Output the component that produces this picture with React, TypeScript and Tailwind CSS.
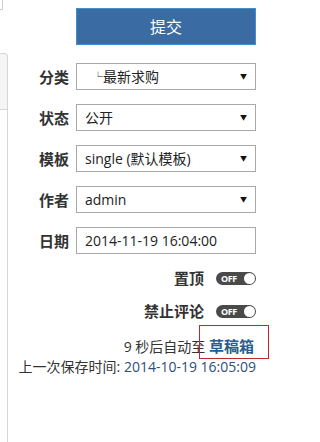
const font = "font-['Open_Sans','Noto_Sans_CJK_SC',sans-serif]";

const SelectRow = ({ label, value, arrow = true }: { label: string; value: React.ReactNode; arrow?: boolean }) => (
  <div className="flex items-center h-[27px]">
    <span className="w-[62px] pr-[1px] text-right text-[15px] font-bold text-[#333] leading-[20px]">{label}</span>
    <div className="ml-[6px] w-[180px] h-[27px] flex items-center border border-[#a9a9a9] bg-white pl-[8px] pr-[8px] text-[14px] text-[#222]">
      <span className="flex-1 whitespace-nowrap overflow-hidden leading-[20px]">{value}</span>
      {arrow && <span className="text-[7px] text-[#111] leading-none">▼</span>}
    </div>
  </div>
);

const Toggle = () => (
  <div className="relative w-[40px] h-[13px] rounded-full bg-[#4a4a4a] flex items-center">
    <span className="pl-[5px] text-[9px] font-bold text-white leading-none tracking-tighter">OFF</span>
    <span className="absolute right-[1px] top-[1px] w-[11px] h-[11px] rounded-full bg-white" />
  </div>
);

export default function App() {
  return (
    <div className={`${font} relative w-[277px] h-[442px] overflow-hidden bg-white flex`}>
      {/* clipped edge of the neighbouring panel */}
      <div className="w-[8px] flex flex-col">
        <div className="w-[3px] h-[10px] border-r border-b border-[#ccc]" />
        <div className="mt-[43px] h-[57px] bg-[#f5f5f5] border border-l-0 border-[#d6d6d6] rounded-tr-[4px]" />
        <div className="flex-1 border-r border-[#d6d6d6]" />
      </div>

      <div className="w-[248px] flex flex-col pt-[8px]">
        <button className="ml-[68px] w-[180px] h-[37px] bg-[#3a6ba3] border border-[#3f90cf] text-white text-[16px]">
          提交
        </button>

        <div className="mt-[18px] flex flex-col gap-[14px]">
          <SelectRow label="分类" value={<span className="pl-[8px]"><span className="text-[10px] align-top">└</span>最新求购</span>} />
          <SelectRow label="状态" value="公开" />
          <SelectRow label="模板" value="single (默认模板)" />
          <SelectRow label="作者" value="admin" />
          <SelectRow label="日期" value="2014-11-19 16:04:00" arrow={false} />
        </div>

        <div className="mt-[18px] flex flex-col items-end gap-[20px]">
          <div className="flex items-center gap-[12px] h-[13px]">
            <span className="text-[15px] font-bold text-[#333]">置顶</span>
            <Toggle />
          </div>
          <div className="flex items-center gap-[12px] h-[13px]">
            <span className="text-[15px] font-bold text-[#333]">禁止评论</span>
            <Toggle />
          </div>
        </div>

        <div className="mt-[18px] flex flex-col items-end text-[14px] text-[#333] leading-[20px]">
          <div className="pr-[2px]">
            9 秒后自动至 <span className="text-[15px] font-bold text-[#2b5c8e]">草稿箱</span>
          </div>
          <div className="whitespace-nowrap">
            上一次保存时间: <span className="text-[#2d4f7a]">2014-10-19 16:05:09</span>
          </div>
        </div>
      </div>

      {/* red highlight box */}
      <div className="absolute left-[199px] top-[325px] w-[70px] h-[34px] border border-[#c0272d]" />
    </div>
  );
}
